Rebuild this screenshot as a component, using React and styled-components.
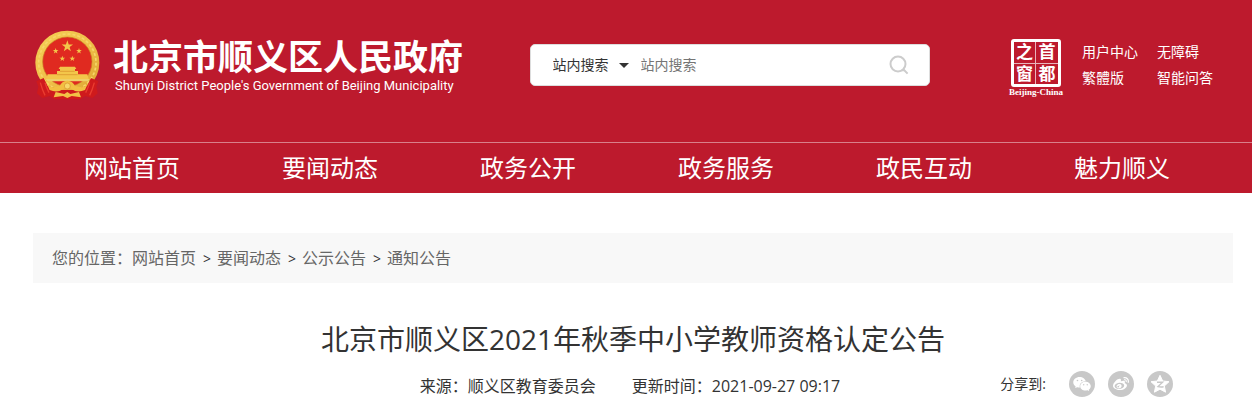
import React, { useState } from 'react'
import styled, { createGlobalStyle } from 'styled-components'
import { AiFillWechat } from 'react-icons/ai'
import { FaWeibo } from 'react-icons/fa'

const GlobalStyle = createGlobalStyle`
    * { box-sizing: border-box; }
    body {
        margin: 0;
        background: #fff;
        color: #333;
        font-family: "Open Sans", "Noto Sans CJK SC", sans-serif;
        font-size: 16px;
    }
    a { color: inherit; text-decoration: none; }
`
const Header = styled.header`
    background: #bd1a2d;
    color: #fff;
`
const Top = styled.div`
    display: flex;
    justify-content: space-between;
    align-items: flex-start;
    padding: 30px 39px 42px 35px;
`
const Brand = styled.a`
    display: flex;
    gap: 12px;
`
const BrandText = styled.div`
    padding-top: 7px;
    white-space: nowrap;
`
const SiteName = styled.div`
    font-size: 35px;
    line-height: 40px;
    font-weight: 700;
`
const SiteNameEn = styled.div`
    padding-left: 2px;
    font-family: Roboto, sans-serif;
    font-size: 13px;
    line-height: 18px;
`
const Search = styled.form`
    display: flex;
    align-items: center;
    width: 400px;
    height: 42px;
    margin: 14px 13px 0 0;
    padding: 0 20px 0 22px;
    border: 1px solid #ddd;
    border-radius: 5px;
    background: #fff;
`
const SelectWrap = styled.label`
    display: flex;
    align-items: center;
    gap: 10px;
    margin-right: 12px;
`
const Select = styled.select`
    appearance: none;
    border: 0;
    padding: 0;
    background: none;
    color: #333;
    font: inherit;
    font-size: 14px;
    line-height: 20px;
`
const Caret = styled.span`
    border: 5px solid transparent;
    border-top-color: #333;
    border-bottom: 0;
`
const SearchInput = styled.input`
    flex: 1;
    min-width: 0;
    border: 0;
    padding: 0;
    outline: none;
    background: none;
    color: #333;
    font: inherit;
    font-size: 14px;
    line-height: 20px;
    &::placeholder { color: #757575; }
`
const SearchButton = styled.button`
    display: flex;
    border: 0;
    padding: 0;
    background: none;
    cursor: pointer;
`
const Tools = styled.div`
    display: flex;
    gap: 19px;
    padding-top: 9px;
`
const Seal = styled.a`
    display: flex;
    flex-direction: column;
    align-items: center;
`
const SealBox = styled.div`
    display: grid;
    grid-template-columns: 1fr 1fr;
    width: 50px;
    height: 48px;
    border: 3px solid #fff;
    border-radius: 3px;
`
const SealChar = styled.span`
    display: flex;
    align-items: center;
    justify-content: center;
    border: 0 solid #e8b4bb;
    border-right-width: ${p => p.$left ? '1px' : '0'};
    border-bottom-width: ${p => p.$top ? '1px' : '0'};
    font-size: 17px;
    line-height: 20px;
    font-weight: 700;
`
const SealName = styled.span`
    font-family: "Liberation Serif", serif;
    font-size: 9px;
    line-height: 10px;
    font-weight: 700;
`
const ToolLinks = styled.div`
    display: grid;
    grid-template-columns: auto auto;
    align-content: start;
    column-gap: 19px;
    font-size: 14px;
    line-height: 26px;
    white-space: nowrap;
`
const Nav = styled.nav`
    display: flex;
    padding: 0 31px 0 33px;
    border-top: 1px solid #d9808b;
`
const NavLink = styled.a`
    flex: 1;
    text-align: center;
    font-size: 24px;
    line-height: 50px;
    &:hover { background: #a81525; }
`
const Main = styled.main`
    padding: 40px 19px 0 33px;
`
const Crumbs = styled.nav`
    padding: 0 19px;
    background: #f8f8f8;
    color: #666;
    line-height: 50px;
`
const Sep = styled.span`
    margin: 0 6px 0 7px;
    color: #333;
    font-size: 14px;
    line-height: 20px;
`
const Title = styled.h1`
    margin: 36px 0 0;
    text-align: center;
    font-size: 28px;
    line-height: 40px;
    font-weight: 400;
`
const Meta = styled.div`
    display: grid;
    grid-template-columns: 1fr auto 1fr;
    align-items: start;
    margin-top: 12px;
`
const Info = styled.div`
    display: flex;
    grid-column: 2;
    gap: 36px;
    padding-right: 6px;
    line-height: 30px;
`
const Share = styled.div`
    display: flex;
    justify-content: flex-end;
    align-items: center;
    gap: 13px;
    padding-right: 60px;
`
const ShareLabel = styled.span`
    margin-right: 10px;
    font-size: 14px;
    line-height: 26px;
`
const ShareButton = styled.button`
    display: flex;
    align-items: center;
    justify-content: center;
    width: 26px;
    height: 26px;
    border: 0;
    border-radius: 50%;
    padding: 0;
    background: #c8c8c8;
    color: #fff;
    cursor: pointer;
`

const navList = ['网站首页', '要闻动态', '政务公开', '政务服务', '政民互动', '魅力顺义']
const toolList = ['用户中心', '无障碍', '繁體版', '智能问答']
const crumbList = ['网站首页', '要闻动态', '公示公告', '通知公告']

const starPoints = (cx, cy, r) => {
    const points = []
    for (let i = 0; i < 10; i++) {
        const radius = i % 2 ? r * 0.4 : r
        const angle = Math.PI * (i / 5 - 0.5)
        points.push(`${(cx + radius * Math.cos(angle)).toFixed(1)},${(cy + radius * Math.sin(angle)).toFixed(1)}`)
    }
    return points.join(' ')
}

function Emblem() {
    return (
        <svg width="66" height="70" viewBox="0 0 198 210" aria-hidden="true">
            <defs>
                <linearGradient id="gold" x1="0" y1="0" x2="1" y2="1">
                    <stop offset="0" stopColor="#f5cf55" />
                    <stop offset="0.5" stopColor="#f0c04a" />
                    <stop offset="1" stopColor="#dba12e" />
                </linearGradient>
            </defs>
            <circle cx="97" cy="98" r="96" fill="url(#gold)" />
            <circle cx="97" cy="98" r="86" fill="none" stroke="#f6d668" strokeWidth="5" strokeDasharray="9 6" />
            <circle cx="97" cy="95" r="74" fill="#e02a20" stroke="#c98222" strokeWidth="2" />
            <g fill="#f3c64a">
                <polygon points={starPoints(97, 49, 18)} />
                <polygon points={starPoints(62, 63, 9)} />
                <polygon points={starPoints(132, 63, 9)} />
                <polygon points={starPoints(82, 86, 9)} />
                <polygon points={starPoints(112, 86, 9)} />
                <path d="M75 110h45l4 7h-4v6h9v10h28l4 14H34l4-14h28v-10h9v-6h-4z" />
                <path d="M32 147h132l-5 7H37z" fill="#efd069" />
            </g>
            <path d="M75 124h44M66 134h62" stroke="#d78c29" strokeWidth="2" />
            <path d="M26 144 38 168 80 180H114L156 168 168 144 190 154 184 170 188 190 172 204 150 198 136 208H58L44 198 22 204 6 190 10 170 4 154Z" fill="#cf1a1c" />
            <path d="M36 162Q44 172 56 172L74 168Q80 153 97 152Q114 153 120 168L138 172Q150 172 158 162L150 180Q126 190 108 176L97 170 86 176Q68 190 44 180Z" fill="#f2bf42" />
            <path d="M56 202 62 186 88 192 97 186 106 192 132 186 138 202 110 198 97 204 84 198Z" fill="#f2c146" />
            <path d="M16 158Q22 180 30 196M30 158Q34 172 42 188M178 158Q172 180 164 196M164 158Q160 172 152 188" stroke="#ea3d30" strokeWidth="4" fill="none" />
            <circle cx="97" cy="168" r="9" fill="#f7d869" stroke="#d6912a" strokeWidth="2" />
        </svg>
    )
}

function QzoneIcon() {
    return (
        <svg width="20" height="20" viewBox="0 0 20 20" aria-hidden="true">
            <path d="M10 1.3 12.7 7 19 7.7 14.3 12 15.6 18.2 10 15.2 4.4 18.2 5.7 12 1 7.7 7.3 7Z" fill="#fff" stroke="#fff" strokeLinejoin="round" />
            <path d="M7 8.3H12.6L8 12.6Q10.5 13.2 13.6 12.7" fill="none" stroke="#c8c8c8" strokeWidth="1.4" />
        </svg>
    )
}

function SearchBar() {
    const [word, setWord] = useState('')
    return (
        <Search onSubmit={e => e.preventDefault()}>
            <SelectWrap>
                <Select aria-label="搜索范围">
                    <option>站内搜索</option>
                </Select>
                <Caret />
            </SelectWrap>
            <SearchInput
                aria-label="搜索"
                placeholder="站内搜索"
                value={word}
                onChange={e => setWord(e.target.value)}
            />
            <SearchButton type="submit" aria-label="搜索">
                <svg width="20" height="20" viewBox="0 0 20 20" fill="none" stroke="#ccc" strokeWidth="2">
                    <circle cx="9" cy="9" r="7.5" />
                    <path d="M13 15.2H15M14.3 14.3 18.6 18.6" />
                </svg>
            </SearchButton>
        </Search>
    )
}

function App() {
    return (
        <>
            <GlobalStyle />
            <Header>
                <Top>
                    <Brand href="#">
                        <Emblem />
                        <BrandText>
                            <SiteName>北京市顺义区人民政府</SiteName>
                            <SiteNameEn>Shunyi District People's Government of Beijing Municipality</SiteNameEn>
                        </BrandText>
                    </Brand>
                    <SearchBar />
                    <Tools>
                        <Seal href="#">
                            <SealBox>
                                <SealChar $left $top>之</SealChar>
                                <SealChar $top>首</SealChar>
                                <SealChar $left>窗</SealChar>
                                <SealChar>都</SealChar>
                            </SealBox>
                            <SealName>Beijing-China</SealName>
                        </Seal>
                        <ToolLinks>
                            {toolList.map(name => <a href="#" key={name}>{name}</a>)}
                        </ToolLinks>
                    </Tools>
                </Top>
                <Nav>
                    {navList.map(name => <NavLink href="#" key={name}>{name}</NavLink>)}
                </Nav>
            </Header>
            <Main>
                <Crumbs>
                    您的位置：
                    {crumbList.map((name, i) => (
                        <React.Fragment key={name}>
                            {i > 0 && <Sep>&gt;</Sep>}
                            <a href="#">{name}</a>
                        </React.Fragment>
                    ))}
                </Crumbs>
                <Title>北京市顺义区2021年秋季中小学教师资格认定公告</Title>
                <Meta>
                    <Info>
                        <span>来源：顺义区教育委员会</span>
                        <span>更新时间：2021-09-27 09:17</span>
                    </Info>
                    <Share>
                        <ShareLabel>分享到:</ShareLabel>
                        <ShareButton aria-label="微信"><AiFillWechat size={20} /></ShareButton>
                        <ShareButton aria-label="微博"><FaWeibo size={16} /></ShareButton>
                        <ShareButton aria-label="QQ空间"><QzoneIcon /></ShareButton>
                    </Share>
                </Meta>
            </Main>
        </>
    )
}

export default App
